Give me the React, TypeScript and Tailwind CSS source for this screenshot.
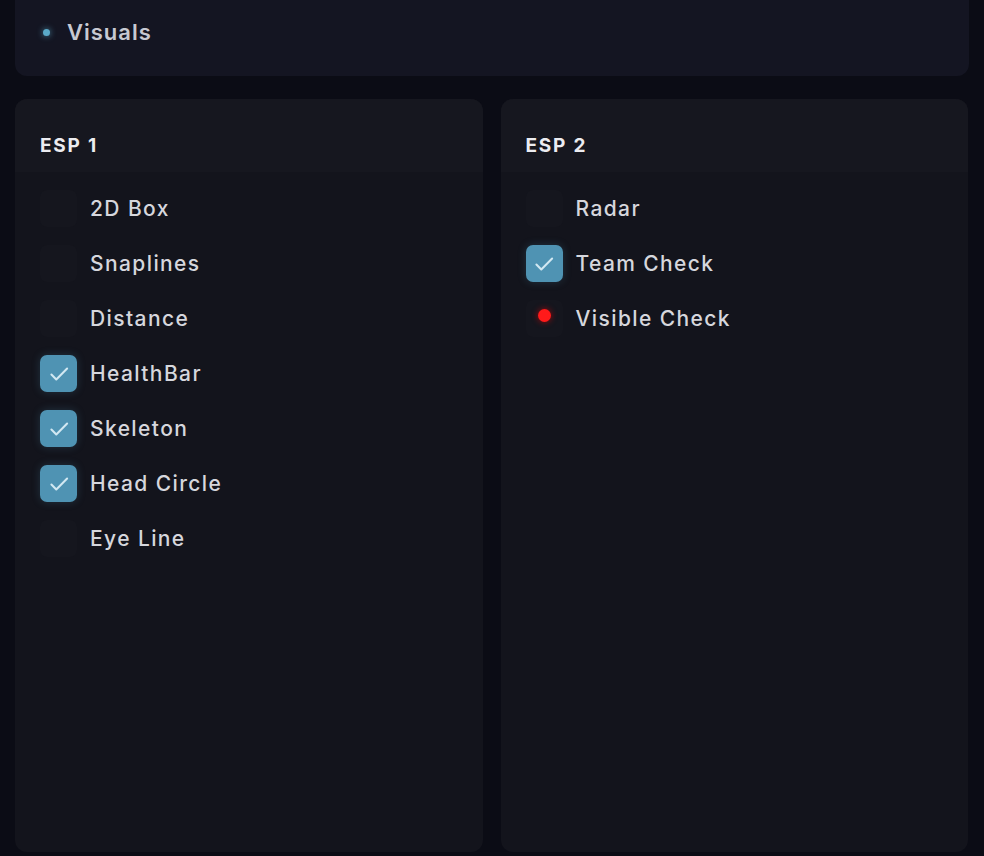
import * as React from 'react';

type Item = { label: string; checked?: boolean; dot?: boolean };

const esp1: Item[] = [
  { label: '2D Box' },
  { label: 'Snaplines' },
  { label: 'Distance' },
  { label: 'HealthBar', checked: true },
  { label: 'Skeleton', checked: true },
  { label: 'Head Circle', checked: true },
  { label: 'Eye Line' },
];

const esp2: Item[] = [
  { label: 'Radar' },
  { label: 'Team Check', checked: true },
  { label: 'Visible Check', dot: true },
];

const CheckRow = ({ item }: { item: Item }) => (
  <div className="flex items-center gap-[13px] h-[37px]">
    <div
      className={
        item.checked
          ? 'w-[37px] h-[37px] rounded-[7px] bg-[#4f93b3] flex items-center justify-center shadow-[0_0_8px_rgba(79,147,179,0.25)]'
          : 'w-[37px] h-[37px] rounded-[7px] bg-[#15161e] flex items-start justify-center'
      }
    >
      {item.checked && (
        <svg width="26" height="26" viewBox="0 0 24 24" fill="none" stroke="#d2e8f2" strokeWidth="1.9" strokeLinecap="round" strokeLinejoin="round">
          <path d="M5 12.5l4.5 4.5L19.5 7" />
        </svg>
      )}
      {item.dot && <div className="mt-[9px] w-[13px] h-[13px] rounded-full bg-[#ff1a1a] shadow-[0_0_6px_rgba(255,0,0,0.6)]" />}
    </div>
    <span className="text-[21px] font-medium text-[#d6d7dd] tracking-[1.4px]">{item.label}</span>
  </div>
);

const Column = ({ title, items }: { title: string; items: Item[] }) => (
  <div className="flex-1 flex flex-col rounded-[12px] bg-[#13141c] overflow-hidden">
    <div className="h-[73px] flex items-center px-[25px] pt-[22px] bg-[#16171f]">
      <span className="text-[19px] font-bold text-[#ececf0] tracking-[1.8px]">{title}</span>
    </div>
    <div className="flex flex-col gap-[18px] px-[25px] pt-[18px]">
      {items.map((it) => (
        <CheckRow key={it.label} item={it} />
      ))}
    </div>
  </div>
);

export default function App() {
  return (
    <div
      className="w-[984px] h-[856px] bg-[#0b0c15] px-[15px] pb-[4px] flex flex-col gap-[23px] overflow-hidden"
      style={{ fontFamily: 'Inter, "Noto Sans", sans-serif' }}
    >
      <div className="h-[76px] shrink-0 rounded-b-[12px] bg-[#141522] flex items-center pl-[28px] gap-[17px] pb-[12px]">
        <div className="w-[7px] h-[7px] rounded-full bg-[#5aa9c8] shadow-[0_0_6px_rgba(90,169,200,0.8)]" />
        <span className="text-[22px] font-semibold text-[#c7c9d2] tracking-[1px]">Visuals</span>
      </div>
      <div className="flex-1 flex gap-[18px] pr-[1px]">
        <Column title="ESP 1" items={esp1} />
        <Column title="ESP 2" items={esp2} />
      </div>
    </div>
  );
}
